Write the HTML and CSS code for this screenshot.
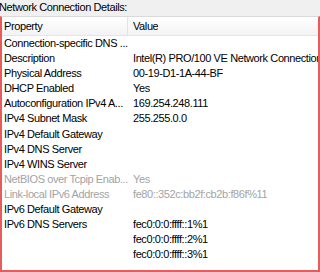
FILE: index.html
```html
<!DOCTYPE html>
<html lang="en">
<head>
    <meta charset="UTF-8">
    <title>Network Connection Details</title>
    <link rel="stylesheet" href="styles.css">
</head>
<body>
    <div class="title">Network Connection Details:</div>
    <div class="list">
        <div class="list-head">
            <div class="col-prop">Property</div>
            <div class="col-val">Value</div>
        </div>
        <div class="row"><div class="col-prop">Connection-specific DNS ...</div><div class="col-val"></div></div>
        <div class="row"><div class="col-prop">Description</div><div class="col-val">Intel(R) PRO/100 VE Network Connection</div></div>
        <div class="row"><div class="col-prop">Physical Address</div><div class="col-val">00-19-D1-1A-44-BF</div></div>
        <div class="row"><div class="col-prop">DHCP Enabled</div><div class="col-val">Yes</div></div>
        <div class="row"><div class="col-prop">Autoconfiguration IPv4 A...</div><div class="col-val">169.254.248.111</div></div>
        <div class="row"><div class="col-prop">IPv4 Subnet Mask</div><div class="col-val">255.255.0.0</div></div>
        <div class="row"><div class="col-prop">IPv4 Default Gateway</div><div class="col-val"></div></div>
        <div class="row"><div class="col-prop">IPv4 DNS Server</div><div class="col-val"></div></div>
        <div class="row"><div class="col-prop">IPv4 WINS Server</div><div class="col-val"></div></div>
        <div class="row dim"><div class="col-prop">NetBIOS over Tcpip Enab...</div><div class="col-val">Yes</div></div>
        <div class="row dim"><div class="col-prop">Link-local IPv6 Address</div><div class="col-val">fe80::352c:bb2f:cb2b:f86f%11</div></div>
        <div class="row"><div class="col-prop">IPv6 Default Gateway</div><div class="col-val"></div></div>
        <div class="row"><div class="col-prop">IPv6 DNS Servers</div><div class="col-val">fec0:0:0:ffff::1%1</div></div>
        <div class="row"><div class="col-prop"></div><div class="col-val">fec0:0:0:ffff::2%1</div></div>
        <div class="row"><div class="col-prop"></div><div class="col-val">fec0:0:0:ffff::3%1</div></div>
    </div>
</body>
</html>
```
FILE: styles.css
```css
* {
    box-sizing: border-box;
}
body {
    margin: 0;
    width: 320px;
    height: 272px;
    overflow: hidden;
    background-color: #f0f0f0;
    font-family: 'Liberation Sans', Arial, sans-serif;
    font-size: 11px;
    letter-spacing: -0.4px;
    color: #000;
}
.title {
    height: 16px;
    line-height: 15px;
    margin-left: -1px;
    white-space: nowrap;
}
.list {
    height: 256px;
    background-color: #fff;
    border: 2px solid #e85a5c;
    border-top: 1px solid #dadada;
    overflow: hidden;
}
.list-head {
    display: flex;
    height: 19px;
    line-height: 19px;
    background: linear-gradient(#ffffff, #f3f3f5);
    border-bottom: 1px solid #e5e5e5;
}
.list-head .col-prop {
    border-right: 1px solid #e3e3e3;
}
.row {
    display: flex;
    height: 15.1px;
    line-height: 15px;
}
.col-prop {
    width: 126px;
    flex: none;
    padding-left: 2px;
    white-space: nowrap;
    overflow: hidden;
}
.col-val {
    padding-left: 5px;
    white-space: nowrap;
    overflow: hidden;
}
.dim {
    color: #a3a3a3;
}
```
